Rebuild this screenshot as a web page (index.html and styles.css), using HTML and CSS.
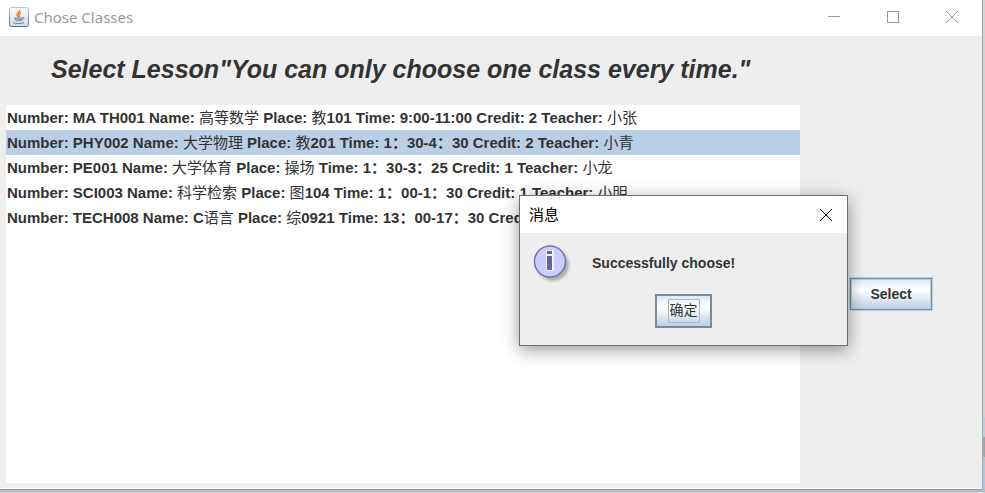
FILE: index.html
```html
<!DOCTYPE html>
<html lang="zh-CN">
<head>
<meta charset="utf-8">
<title>Chose Classes</title>
<link rel="stylesheet" href="styles.css">
</head>
<body>
<div class="desktop">
<main class="window">
  <header class="titlebar">
    <svg class="app-icon" viewBox="0 0 20 20" aria-hidden="true">
      <defs>
        <linearGradient id="tile" x1="0" y1="0" x2="0" y2="1"><stop offset="0" stop-color="#fbfcfd"/><stop offset="1" stop-color="#d3dbe2"/></linearGradient>
        <linearGradient id="edge" x1="0" y1="0" x2="0" y2="1"><stop offset="0" stop-color="#b9c1c9"/><stop offset="1" stop-color="#586e82"/></linearGradient>
      </defs>
      <rect x=".5" y=".5" width="19" height="19" rx="2" fill="url(#tile)" stroke="url(#edge)"/>
      <path d="M10.500 3c1 2-3 3-2.500 5 .2 1 1.200 1.500 1 2.500M12 5.500c-2 1-2.800 1.800-1.800 3 .5.700.2 1.500-.4 2" fill="none" stroke="#e8853a" stroke-width="1.500"/>
      <path d="M5 10.500h8.500c-.2 2-.8 3.200-1.800 3.800H7.300C6 13.500 5.300 12 5 10.500z" fill="#7f9db5"/>
      <path d="M6.500 12h6M13.300 10.500c2.500-.6 2.200 1.800-.9 2.500M4 15.500c2.500 1.500 8.500 1.500 11 0" fill="none" stroke="#5b7f9e" stroke-width="1"/>
      <path d="M6.500 12h5.500" stroke="#dbe5ec" stroke-width=".7"/>
    </svg>
    <span class="window-title">Chose Classes</span>
    <div class="window-controls">
      <button class="control" aria-label="Minimize"><svg viewBox="0 0 12 12"><path d="M0 5.500h12"/></svg></button>
      <button class="control" aria-label="Maximize"><svg viewBox="0 0 12 12"><path d="M.5.500h11v11H.5z"/></svg></button>
      <button class="control" aria-label="Close"><svg viewBox="0 0 12 12"><path d="M0 0l12 12M12 0L0 12"/></svg></button>
    </div>
  </header>
  <h1 class="heading">Select Lesson"You can only choose one class every time."</h1>
  <div class="content">
    <ul class="lessons" role="listbox" aria-label="Lessons">
      <li role="option">Number: MA TH001 Name: <span class="han">高等数学</span> Place: <span class="han">教</span>101 Time: 9:00-11:00 Credit: 2 Teacher: <span class="han">小张</span></li>
      <li role="option" class="selected" aria-selected="true">Number: PHY002 Name: <span class="han">大学物理</span> Place: <span class="han">教</span>201 Time: 1：30-4：30 Credit: 2 Teacher: <span class="han">小青</span></li>
      <li role="option">Number: PE001 Name: <span class="han">大学体育</span> Place: <span class="han">操场</span> Time: 1：30-3：25 Credit: 1 Teacher: <span class="han">小龙</span></li>
      <li role="option">Number: SCI003 Name: <span class="han">科学检索</span> Place: <span class="han">图</span>104 Time: 1：00-1：30 Credit: 1 Teacher: <span class="han">小明</span></li>
      <li role="option">Number: TECH008 Name: C<span class="han">语言</span> Place: <span class="han">综</span>0921 Time: 13：00-17：30 Credit</li>
    </ul>
    <div class="actions"><button class="metal select-button">Select</button></div>
  </div>
</main>
<div class="behind-right"></div>
<div class="behind-bottom"></div>
</div>
<section class="dialog" role="dialog" aria-labelledby="dialog-title">
  <header class="dialog-bar">
    <span id="dialog-title">消息</span>
    <button class="dialog-close" aria-label="Close"><svg viewBox="0 0 12 12"><path d="M0 0l12 12M12 0L0 12"/></svg></button>
  </header>
  <div class="message">
    <svg class="info" viewBox="0 0 40 40" aria-hidden="true">
      <defs><filter id="soft" x="-20%" y="-20%" width="140%" height="140%"><feGaussianBlur stdDeviation="1.500"/></filter></defs>
      <circle cx="20" cy="21" r="16" fill="#999" opacity=".75" filter="url(#soft)"/>
      <circle cx="17" cy="17.500" r="15.500" fill="#ccf" stroke="#7474a8" stroke-width="1.500"/>
      <path d="M13 6h8v21h-8z" fill="#f0f0ff"/>
      <path d="M14 7h5v3h-5zM14 12h5v14h-5z" fill="#669"/>
    </svg>
    <p>Successfully choose!</p>
  </div>
  <button class="metal ok-button"><span class="han">确定</span></button>
</section>
</body>
</html>
```
FILE: styles.css
```css
* { box-sizing: border-box; }

body {
  margin: 0;
  background: #fff;
  color: #333;
  font: bold 15px/25px "Liberation Sans", "Noto Sans CJK SC", sans-serif;
}

button { padding: 0; border: 0; background: none; color: inherit; font: inherit; }
svg { display: block; }
.han { font-weight: normal; }

.desktop {
  display: grid;
  grid-template-columns: 1fr 2px;
  grid-template-rows: 1fr 3px;
  height: 100vh;
  overflow: hidden;
}

.window {
  display: flex;
  flex-direction: column;
  min-width: 0;
  background: #eee;
  border-right: 1px solid #aaa;
  border-bottom: 1px solid #8e96a3;
  box-shadow: inset 0 -1px #fff;
}

.behind-right {
  background: linear-gradient(#d2d2d2 0 417px, #bfcddb 417px 437px, #a5a5a5 437px 457px, #b4c7da 457px);
}

.behind-bottom {
  grid-column: 1 / -1;
  background: linear-gradient(#b0b6c4, #b8bdca 66%, #d5d7dd 66%);
}

.titlebar {
  display: flex;
  align-items: center;
  height: 36px;
  padding: 0 1px 2px 9px;
  background: #fff;
  color: #999;
}

.app-icon { width: 20px; height: 20px; margin-right: 5px; }
.window-title { font: 15px/34px "Noto Sans", sans-serif; }
.window-controls { display: flex; margin-left: auto; }
.control { display: grid; place-items: center; width: 59px; height: 34px; }
.control svg, .dialog-close svg {
  width: 12px;
  height: 12px;
  fill: none;
  stroke: #999;
  shape-rendering: crispEdges;
}

.heading {
  margin: 0;
  padding: 18px 0 21px 51px;
  font-size: 25px;
  line-height: 30px;
  font-style: italic;
}

.content { display: flex; flex: 1; padding: 0 0 6px 6px; }

.lessons {
  flex: 1;
  margin: 0;
  padding: 0;
  background: #fff;
  list-style: none;
}
.lessons li { padding-left: 1px; white-space: nowrap; }
.lessons .selected { background: #b8cfe5; }

.actions { display: grid; place-items: center; width: 182px; }

.metal {
  background: linear-gradient(#dce8f3, #fff 35%, #fff 40%, #b8cfe5);
  font-size: 14px;
  line-height: 20px;
}
.select-button {
  width: 82px;
  height: 32px;
  border: 1px solid #7a8a99;
  box-shadow: 0 0 0 1px #b8cfe5, inset 0 0 0 1px #b8cfe5;
}

.dialog {
  position: absolute;
  left: 519px;
  top: 195px;
  display: flex;
  flex-direction: column;
  width: 329px;
  padding-bottom: 17px;
  border: 1px solid #6e6e6e;
  background: #eee;
  box-shadow: 0 4px 16px rgba(0, 0, 0, .4);
}
.dialog-bar {
  display: flex;
  align-items: center;
  justify-content: space-between;
  height: 37px;
  padding: 0 15px 0 9px;
  background: #fff;
  color: #000;
  font-weight: normal;
}
.dialog-close svg { stroke: #000; }
.message { display: flex; align-items: center; gap: 19px; padding: 11px 13px 0; }
.message p { margin: 0 0 2px; font-size: 14px; }
.info { width: 40px; height: 40px; }
.ok-button {
  align-self: center;
  width: 57px;
  height: 34px;
  margin-top: 10px;
  border: 2px solid #7a8a99;
}
.ok-button span {
  display: inline-block;
  height: 24px;
  border: 1px solid #a3b8cc;
  padding: 0 1px;
  vertical-align: middle;
}
```
